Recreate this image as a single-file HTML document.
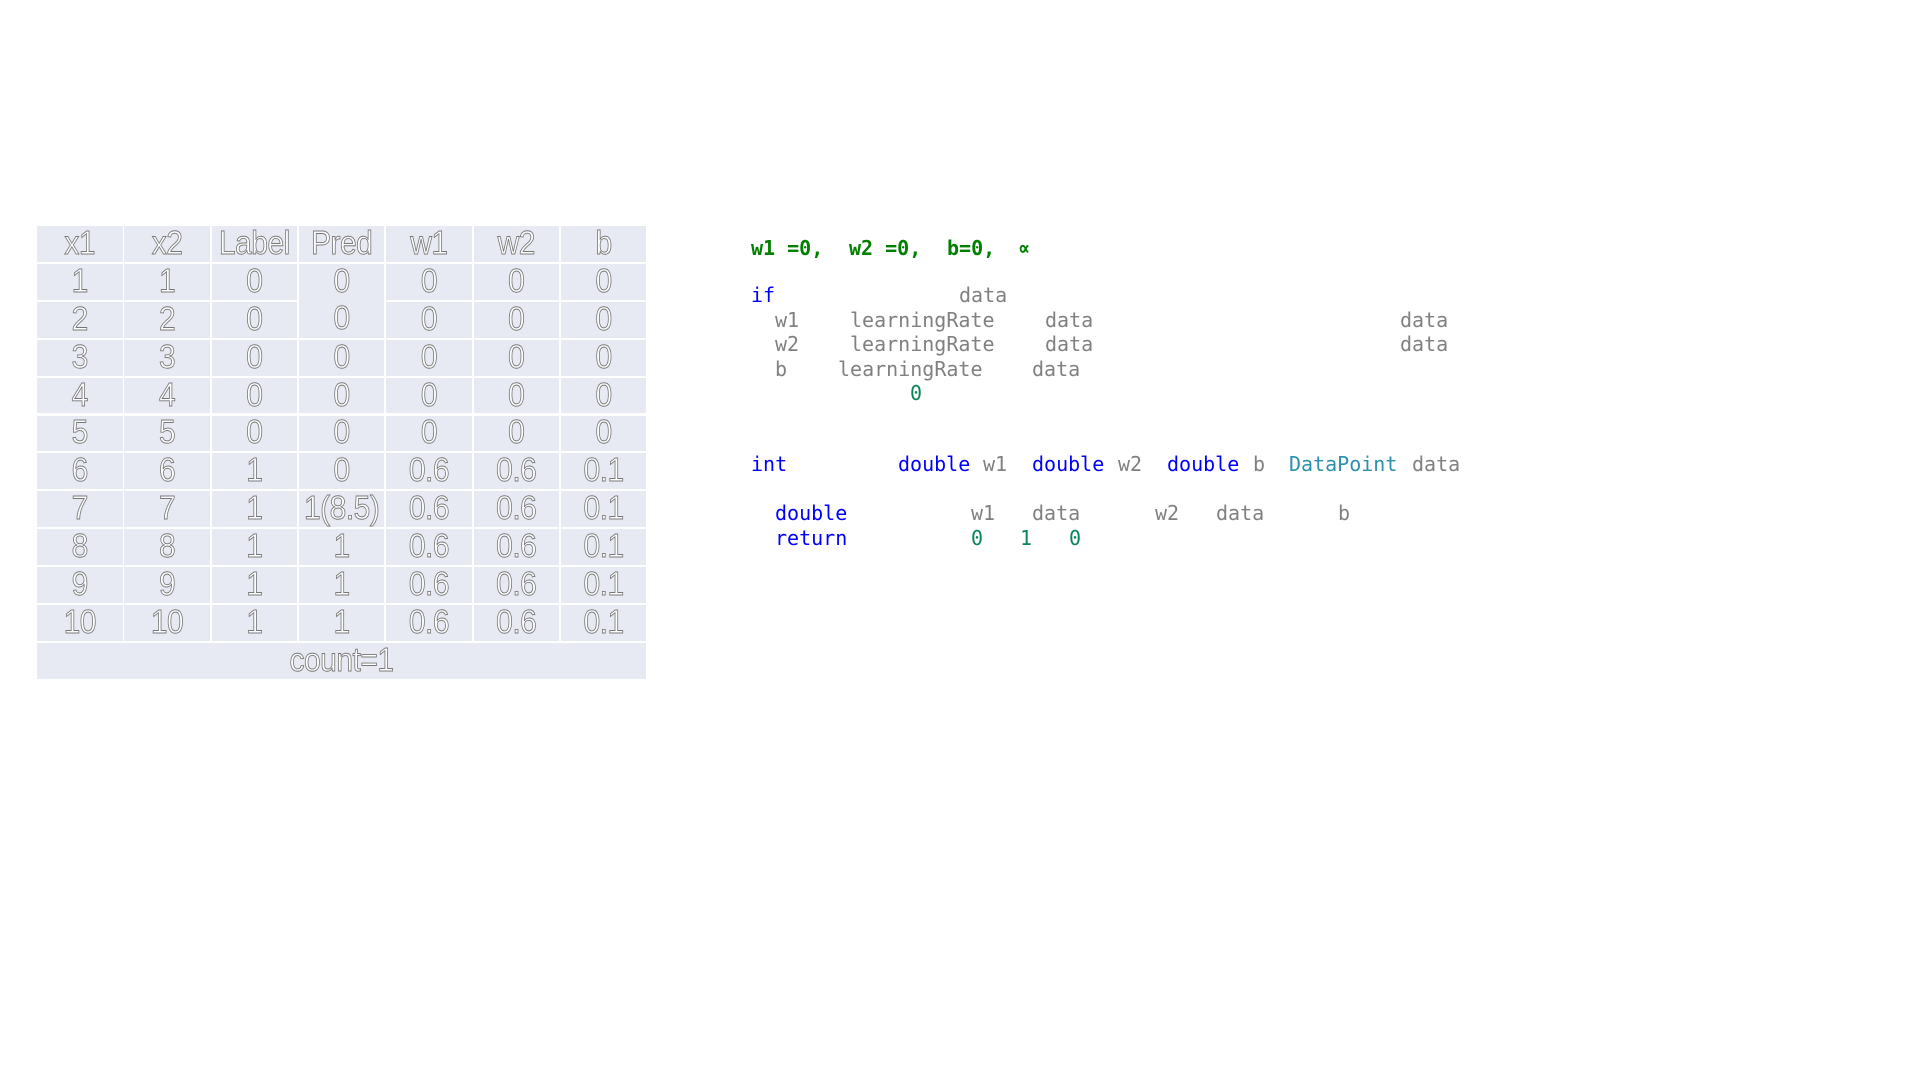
<!DOCTYPE html>
<html><head><meta charset="utf-8"><style>
body{margin:0;width:1920px;height:1080px;background:#fff;position:relative;overflow:hidden}
.c{position:absolute;background:#e8eaf3;display:flex;align-items:center;justify-content:center;font-family:"Liberation Sans",sans-serif;font-size:30px;color:#fff;-webkit-text-stroke:0.8px #777;letter-spacing:-0.5px}
.c span.s{display:inline-block;transform:scaleY(1.12)}
.t{position:absolute;font-family:"DejaVu Sans Mono",monospace;font-size:20px;line-height:24px;white-space:pre;color:#808080}
.g{color:#008000;font-weight:bold}.b{color:#0000ff}.n{color:#098658}.d{color:#2b91af}
</style></head><body>
<div id="tbl"></div>
<script>
var w=85.5,rows=[
["x1","x2","Label","Pred","w1","w2","b"],
["1","1","0","0","0","0","0"],["2","2","0","0","0","0","0"],["3","3","0","0","0","0","0"],["4","4","0","0","0","0","0"],["5","5","0","0","0","0","0"],
["6","6","1","0","0.6","0.6","0.1"],["7","7","1","1(8.5)","0.6","0.6","0.1"],["8","8","1","1","0.6","0.6","0.1"],["9","9","1","1","0.6","0.6","0.1"],["10","10","1","1","0.6","0.6","0.1"]];
var h="";
for(var r=0;r<rows.length;r++){var y=226+r*37.9;
for(var c=0;c<7;c++){
 var x=37+c*87.3;
 if(r==2&&c==3)continue;
 var hh=35.9;
 if(r==1&&c==3){h+='<div class="c" style="left:'+x+'px;top:'+y+'px;width:'+w+'px;height:73.8px;flex-direction:column;justify-content:space-around"><span class="s">0</span><span class="s">0</span></div>';continue;}
 h+='<div class="c" style="left:'+x+'px;top:'+y+'px;width:'+w+'px;height:'+hh+'px"><span class="s">'+rows[r][c]+'</span></div>';}}
h+='<div class="c" style="left:37px;top:'+(226+11*37.9)+'px;width:609px;height:36px"><span class="s">count=1</span></div>';
document.getElementById("tbl").innerHTML=h;
</script>
<div class="t g" style="left:751px;top:236px">w1 =0,</div>
<div class="t g" style="left:849px;top:236px">w2 =0,</div>
<div class="t g" style="left:947px;top:236px">b=0,</div>
<div class="t g" style="left:1018px;top:236px">∝</div>

<div class="t b" style="left:751px;top:283px">if</div>
<div class="t" style="left:959px;top:283px">data</div>
<div class="t" style="left:775px;top:308px">w1</div>
<div class="t" style="left:850px;top:308px">learningRate</div>
<div class="t" style="left:1045px;top:308px">data</div>
<div class="t" style="left:1400px;top:308px">data</div>
<div class="t" style="left:775px;top:332px">w2</div>
<div class="t" style="left:850px;top:332px">learningRate</div>
<div class="t" style="left:1045px;top:332px">data</div>
<div class="t" style="left:1400px;top:332px">data</div>
<div class="t" style="left:775px;top:357px">b</div>
<div class="t" style="left:838px;top:357px">learningRate</div>
<div class="t" style="left:1032px;top:357px">data</div>
<div class="t n" style="left:910px;top:381px">0</div>

<div class="t b" style="left:751px;top:452px">int</div>
<div class="t b" style="left:898px;top:452px">double</div>
<div class="t" style="left:983px;top:452px">w1</div>
<div class="t b" style="left:1032px;top:452px">double</div>
<div class="t" style="left:1118px;top:452px">w2</div>
<div class="t b" style="left:1167px;top:452px">double</div>
<div class="t" style="left:1253px;top:452px">b</div>
<div class="t d" style="left:1289px;top:452px">DataPoint</div>
<div class="t" style="left:1412px;top:452px">data</div>

<div class="t b" style="left:775px;top:501px">double</div>
<div class="t" style="left:971px;top:501px">w1</div>
<div class="t" style="left:1032px;top:501px">data</div>
<div class="t" style="left:1155px;top:501px">w2</div>
<div class="t" style="left:1216px;top:501px">data</div>
<div class="t" style="left:1338px;top:501px">b</div>
<div class="t b" style="left:775px;top:526px">return</div>
<div class="t n" style="left:971px;top:526px">0</div>
<div class="t n" style="left:1020px;top:526px">1</div>
<div class="t n" style="left:1069px;top:526px">0</div>
</body></html>
